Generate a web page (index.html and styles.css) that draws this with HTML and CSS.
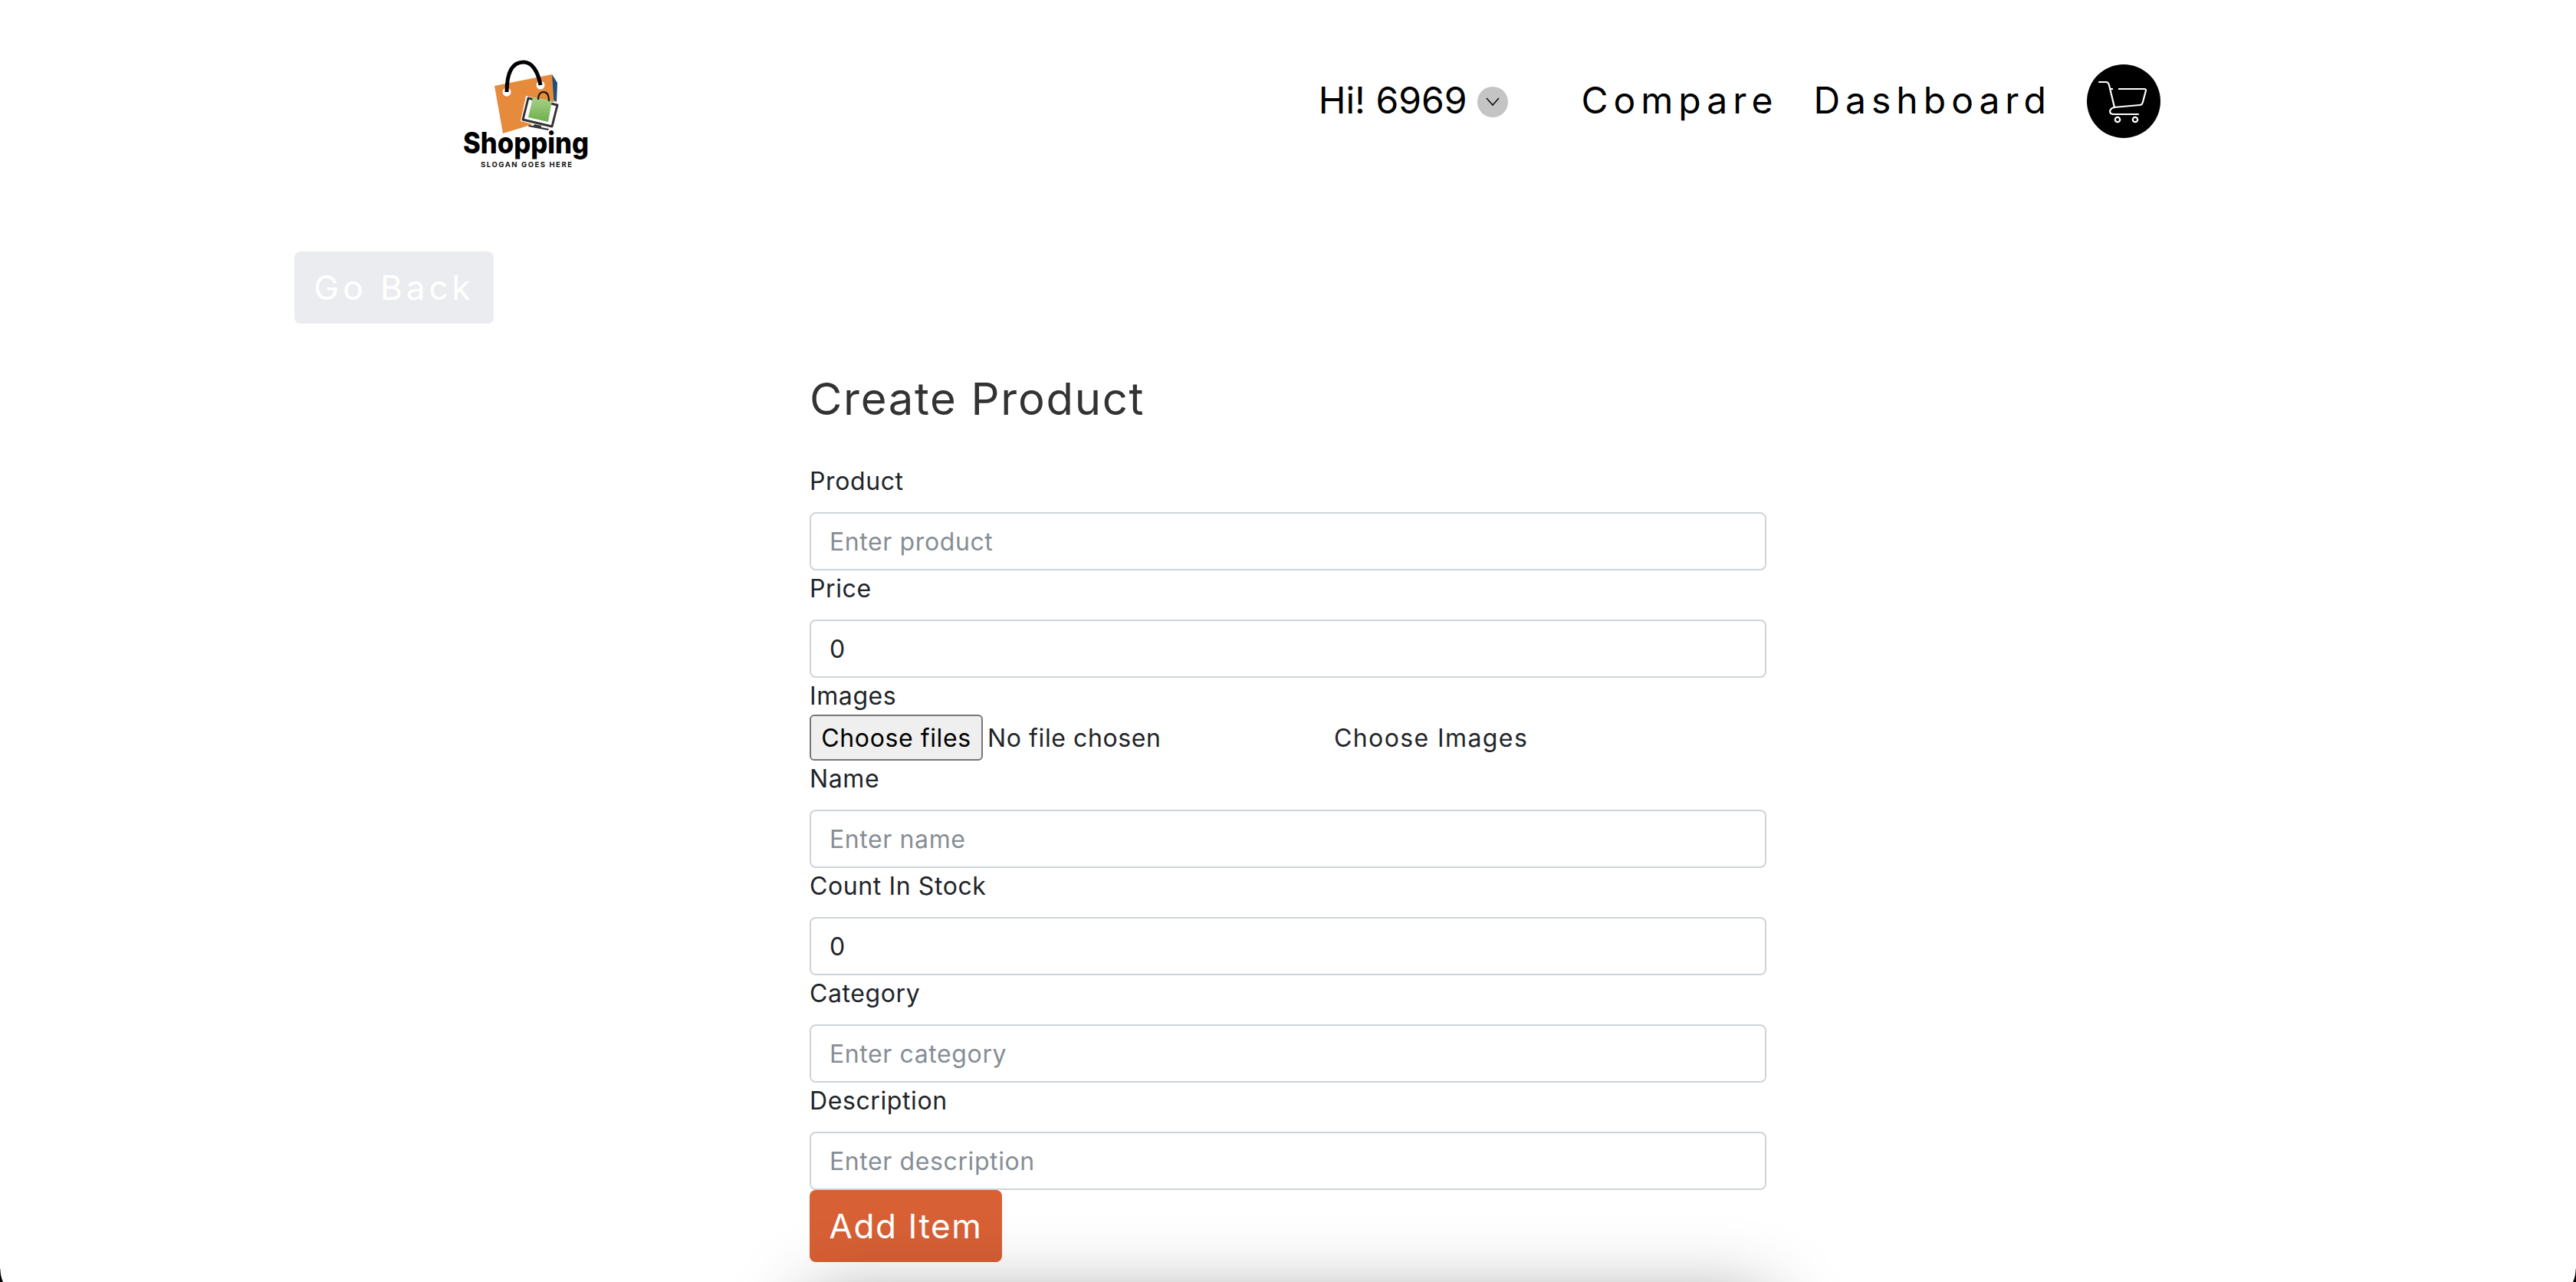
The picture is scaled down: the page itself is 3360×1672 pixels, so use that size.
FILE: index.html
```html
<!DOCTYPE html>
<html lang="en">
<head>
    <meta charset="UTF-8">
    <title>Create Product</title>
    <link rel="stylesheet" href="styles.css">
</head>
<body>
    <header class="navbar">
        <a class="brand" href="#">
            <svg class="brand-logo" width="240" height="190" viewBox="0 0 240 190">
                <defs>
                    <linearGradient id="greenBag" x1="0" y1="0" x2="0" y2="1">
                        <stop offset="0" stop-color="#a9d08a"/>
                        <stop offset="1" stop-color="#6cb04a"/>
                    </linearGradient>
                </defs>
                <polygon points="160,47 167,58 166,83 160,80" fill="#1f4e79"/>
                <polygon points="85,62 160,47 163,90 132,113 96,124" fill="#e68a3c"/>
                <circle cx="101" cy="70" r="5.5" fill="#fff"/>
                <circle cx="145" cy="61" r="5.5" fill="#fff"/>
                <path d="M101 70 C101 45 108 31 123 31 C135 31 142 45 145 61" fill="none" stroke="#000" stroke-width="5"/>
                <polygon points="126,75 170,85 162,119 119,108" fill="#fff"/>
                <polygon points="129,78 167,87 160,115 122,106" fill="none" stroke="#333" stroke-width="3" stroke-linejoin="round"/>
                <polygon points="135,77 160,81 155,109 129,103" fill="url(#greenBag)"/>
                <path d="M142 80 C142 72 146 70 149 70 C153 70 156 74 156 82" fill="none" stroke="#111" stroke-width="2"/>
                <polygon points="137,112 146,114 146,116 156,118 155,120 129,115 130,113 136,114" fill="#333"/>
                <text class="brand-name" x="44" y="150" textLength="164" lengthAdjust="spacingAndGlyphs">Shopping</text>
                <text class="brand-slogan" x="67" y="168" textLength="119" lengthAdjust="spacing">SLOGAN GOES HERE</text>
            </svg>
        </a>
        <nav class="nav-links">
            <a class="nav-user" href="#">Hi! 6969
                <span class="chevron-badge">
                    <svg width="20" height="14" viewBox="0 0 20 14"><path d="M2 2 L10 11 L18 2" fill="none" stroke="#111" stroke-width="1.6"/></svg>
                </span>
            </a>
            <a class="nav-link" href="#">Compare</a>
            <a class="nav-link" href="#">Dashboard</a>
            <a class="cart-badge" href="#">
                <svg width="68" height="60" viewBox="0 0 68 60">
                    <path d="M2 5 H11 Q14 5 15 9 L22 38 Q17 39 16 43 Q16 47 21 47 H53" fill="none" stroke="#fff" stroke-width="2.2" stroke-linecap="round"/>
                    <path d="M21 38 L55 35 Q58 35 59 31 L63 16 Q63 14 61 14 H27" fill="none" stroke="#fff" stroke-width="2.2"/>
                    <path d="M17 14 H20" stroke="#fff" stroke-width="2.2"/>
                    <circle cx="26" cy="54" r="3.2" fill="none" stroke="#fff" stroke-width="2.2"/>
                    <circle cx="49" cy="54" r="3.2" fill="none" stroke="#fff" stroke-width="2.2"/>
                </svg>
            </a>
        </nav>
    </header>

    <main class="page">
        <a class="btn-back" href="#">Go Back</a>
        <div class="form-wrap">
            <h1>Create Product</h1>
            <form>
                <div class="form-group">
                    <label for="product">Product</label>
                    <input class="form-control" id="product" type="text" placeholder="Enter product">
                </div>
                <div class="form-group">
                    <label for="price">Price</label>
                    <input class="form-control" id="price" type="number" value="0">
                </div>
                <div class="form-group">
                    <label class="label-tight" for="images">Images</label>
                    <div class="file-row">
                        <div class="file-input">
                            <button class="file-button" id="images" type="button">Choose files</button>
                            <span>No file chosen</span>
                        </div>
                        <span class="file-label">Choose Images</span>
                    </div>
                </div>
                <div class="form-group">
                    <label for="name">Name</label>
                    <input class="form-control" id="name" type="text" placeholder="Enter name">
                </div>
                <div class="form-group">
                    <label for="stock">Count In Stock</label>
                    <input class="form-control" id="stock" type="number" value="0">
                </div>
                <div class="form-group">
                    <label for="category">Category</label>
                    <input class="form-control" id="category" type="text" placeholder="Enter category">
                </div>
                <div class="form-group">
                    <label for="description">Description</label>
                    <input class="form-control" id="description" type="text" placeholder="Enter description">
                </div>
                <button class="btn-submit" type="button">Add Item</button>
            </form>
            <div class="below-fold"></div>
        </div>
    </main>
</body>
</html>
```

FILE: styles.css
```css
body {
    position: relative;
    margin: 0;
    height: 1672px;
    overflow: hidden;
    background-color: #fff;
    font-family: Inter, "Noto Sans", sans-serif;
    font-size: 32px;
    color: #212529;
}
/* window corners at the bottom edge */
body::before,
body::after {
    content: "";
    position: absolute;
    bottom: 0;
    z-index: 2;
    width: 4px;
    height: 17px;
}
body::before {
    left: 0;
    background: radial-gradient(circle 43px at 43px 0, transparent 98%, #000 100%);
}
body::after {
    right: 0;
    background: radial-gradient(circle 43px at -39px 0, transparent 98%, #000 100%);
}
a {
    text-decoration: none;
    color: inherit;
}

/* header */
.navbar {
    display: flex;
    align-items: flex-start;
    justify-content: space-between;
    width: 2280px;
    height: 264px;
    margin: 0 auto;
    box-sizing: border-box;
    padding: 84px 2px 0 20px;
}
.brand-logo {
    display: block;
    margin-top: -34px;
}
.brand-name {
    font-size: 38px;
    font-weight: 800;
    fill: #000;
}
.brand-slogan {
    font-size: 9.5px;
    font-weight: 700;
    fill: #111;
}
.nav-links {
    display: flex;
    align-items: center;
    height: 96px;
}
.nav-user {
    display: flex;
    align-items: center;
    gap: 14px;
    margin-right: 95px;
    font-size: 48px;
    color: #000;
    margin-top: -4px;
}
.chevron-badge {
    display: flex;
    align-items: center;
    justify-content: center;
    width: 40px;
    height: 40px;
    border-radius: 50%;
    background-color: #c4c4c4;
    margin-top: 6px;
}
.nav-link {
    margin-right: 46px;
    font-size: 48px;
    letter-spacing: 7px;
    color: #000;
    margin-top: -4px;
}
.cart-badge {
    display: flex;
    align-items: center;
    justify-content: center;
    width: 96px;
    height: 96px;
    border-radius: 50%;
    background-color: #000;
}

/* page */
.page {
    width: 2592px;
    height: 1408px;
    margin: 0 auto;
    overflow: hidden;
}
.btn-back {
    display: inline-block;
    width: 260px;
    height: 94px;
    box-sizing: border-box;
    line-height: 94px;
    text-align: center;
    margin-top: 64px;
    border-radius: 8px;
    background-color: #ebecf0;
    color: #fff;
    font-size: 44px;
    letter-spacing: 5px;
}
.form-wrap {
    width: 1248px;
    margin: 0 auto;
}
h1 {
    margin: 65px 0 50px;
    font-size: 58px;
    font-weight: 400;
    line-height: 67px;
    letter-spacing: 1.7px;
    color: #333;
}
label {
    display: block;
    height: 48px;
    line-height: 48px;
    margin-bottom: 16px;
    letter-spacing: 0.6px;
}
.label-tight {
    margin-bottom: 0;
}
.form-control {
    display: block;
    width: 100%;
    height: 76px;
    box-sizing: border-box;
    padding: 0 24px;
    border: 2px solid #ced4da;
    border-radius: 8px;
    font-family: inherit;
    font-size: 32px;
    letter-spacing: 0.6px;
    color: #212529;
}
.form-control::placeholder {
    color: #868e96;
}
.file-row {
    display: flex;
    align-items: center;
    height: 60px;
    letter-spacing: 0.6px;
}
.file-input {
    display: flex;
    align-items: center;
    gap: 6px;
    width: 684px;
}
.file-button {
    width: 226px;
    height: 60px;
    padding: 0;
    border: 2px solid #767676;
    border-radius: 6px;
    background-color: #efefef;
    font-family: inherit;
    font-size: 32px;
    letter-spacing: 0.6px;
    color: #000;
}
.file-label {
    letter-spacing: 1.4px;
}
.btn-submit {
    display: block;
    width: 251px;
    height: 94px;
    padding: 0;
    border: none;
    border-radius: 8px;
    background-color: #d86035;
    color: #fff;
    font-family: inherit;
    font-size: 44px;
    letter-spacing: 1.6px;
}
.below-fold {
    height: 300px;
    margin-top: 55px;
    background-color: #fff;
    box-shadow: 0 0 95px rgba(0, 0, 0, 0.45);
}
```
